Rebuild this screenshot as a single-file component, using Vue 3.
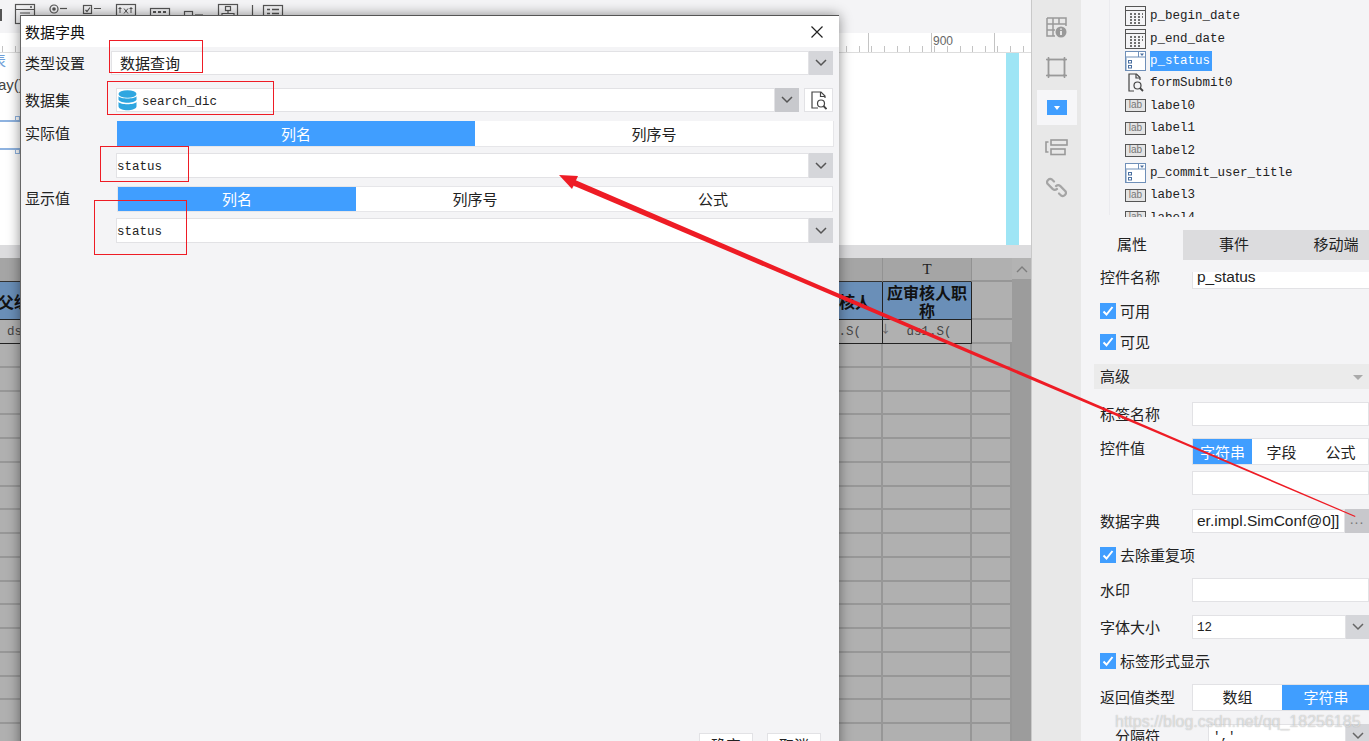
<template>
  <div class="app">
    <!-- left: report designer -->
    <div class="workspace">
      <div class="toolbar">
        <svg class="tool-icons" width="300" height="33" viewBox="0 0 300 33" fill="none" stroke="#555" stroke-width="1.2">
          <rect x="-4" y="9" width="6" height="12" fill="#555" stroke="none" />
          <rect x="15.5" y="4.5" width="19" height="19" />
          <path d="M16 9.5h18M20 13h10M20 16h10" />
          <circle cx="31" cy="7" r="1" fill="#555" stroke="none" />
          <circle cx="54" cy="9" r="4" />
          <circle cx="54" cy="9" r="1.8" fill="#555" stroke="none" />
          <path d="M60 8.5h7" />
          <rect x="83.5" y="5.5" width="8" height="8" />
          <path d="M85.5 10l1.5 1.5 3-4M94 8.5h7" />
          <rect x="116.5" y="4.5" width="19" height="11" />
          <path d="M120 7v6M118.5 8.5h3M124 8.5l4 5M128 8.5l-4 5M131 7v6M129.5 8.5h3" stroke-width="1" />
          <rect x="150.5" y="8.5" width="19" height="9" />
          <path d="M153 12h3M158 12h3M163 12h3" stroke-width="2" />
          <rect x="184.5" y="11.5" width="8" height="8" />
          <path d="M195 15h8" />
          <rect x="218.5" y="4.5" width="19" height="17" />
          <rect x="225.5" y="6.5" width="5" height="4" />
          <path d="M228 10.5v3M222 17v-3.5h12V17" />
          <path d="M252.5 5v13" />
          <rect x="263.5" y="5.5" width="19" height="14" />
          <path d="M267 9.5h3M272 9.5h7M267 13.5h3M272 13.5h7" stroke-width="1.5" />
        </svg>
      </div>
      <div class="ruler"><span class="ruler-label">900</span></div>
      <div class="canvas">
        <span class="canvas-tab">表</span>
        <span class="canvas-text">ay()</span>
        <div class="canvas-guide"></div>
        <div class="canvas-margin"></div>
      </div>
      <div class="splitter"></div>
      <div class="sheet">
        <div class="grid">
          <div v-for="(cell, i) in cells" :key="i" class="cell" :class="cell.cls">{{ cell.text }}</div>
          <span class="cell-marker">↓</span>
        </div>
        <div class="scrollbar">
          <div class="scroll-up">
            <svg width="12" height="8" viewBox="0 0 12 8" fill="none" stroke="#7d7d7d" stroke-width="1.4"><path d="M1 7l5-5 5 5" /></svg>
          </div>
        </div>
      </div>
    </div>

    <!-- vertical icon strip -->
    <div class="strip">
      <div class="strip-btn">
        <svg width="21" height="21" viewBox="0 0 21 21" fill="none" stroke="#999" stroke-width="1.5">
          <path d="M1 1h19v8M1 1v18h8M1 7h19M1 13h8M7 1v18M13 1v6" />
          <circle cx="15" cy="15" r="5.5" fill="#999" stroke="none" />
          <path d="M15 14v4M15 11.5v1.3" stroke="#fff" />
        </svg>
      </div>
      <div class="strip-btn">
        <svg width="21" height="21" viewBox="0 0 21 21" fill="none" stroke="#999" stroke-width="1.5">
          <rect x="2.5" y="2.5" width="16" height="16" stroke-width="1.8" />
          <path d="M0 2.5h4M2.5 0v4M17 2.5h4M18.5 0v4M0 18.5h4M2.5 17v4M17 18.5h4M18.5 17v4" />
        </svg>
      </div>
      <div class="strip-btn is-active">
        <div class="combo-icon"><span class="combo-arrow"></span></div>
      </div>
      <div class="strip-btn">
        <svg width="23" height="17" viewBox="0 0 23 17" fill="none" stroke="#999" stroke-width="1.6">
          <rect x="6" y="1" width="16" height="5" />
          <rect x="6" y="10" width="14" height="5.5" />
          <path d="M3.5 3H1v10h2.5" />
        </svg>
      </div>
      <div class="strip-btn">
        <svg width="21" height="21" viewBox="0 0 21 21" fill="none" stroke="#a5a5a5" stroke-width="2.2" stroke-linecap="round">
          <path d="M8 4.5L6 2.5a3.2 3.2 0 0 0-4.4 4.4l5 5a3.2 3.2 0 0 0 4.4 0" />
          <path d="M13 16.5l2 2a3.2 3.2 0 0 0 4.4-4.4l-5-5a3.2 3.2 0 0 0-4.4 0" />
        </svg>
      </div>
    </div>

    <!-- right: widget tree and properties -->
    <div class="panel">
      <div class="tree">
        <div class="tree-guide"></div>
        <div class="tree-list">
          <div v-for="node in tree" :key="node.name" class="tree-row">
            <svg v-if="node.type === 'date'" class="tree-icon" width="21" height="20" viewBox="0 0 21 20" fill="none" stroke="#555">
              <rect x="0.5" y="0.5" width="20" height="19" />
              <path d="M1 4.5h19" />
              <path d="M5 8h2M9 8h2M13 8h2M17 8h1M5 11h2M9 11h2M13 11h2M17 11h1M5 14h2M9 14h2M13 14h2M5 17h2M9 17h2M13 17h2" stroke-width="1.5" stroke="#444" />
            </svg>
            <svg v-else-if="node.type === 'combo'" class="tree-icon" width="21" height="20" viewBox="0 0 21 20" fill="none" stroke="#6f8fb8">
              <rect x="0.5" y="0.5" width="20" height="19" fill="#fff" />
              <path d="M1 6h19M1 6.5v13M13.5 1v5" />
              <path d="M15 2.5h4l-2 2.5z" fill="#4a6fa0" stroke="none" />
              <rect x="3.5" y="9.5" width="3" height="2.5" stroke="#4a6fa0" />
              <rect x="3.5" y="14.5" width="3" height="2.5" stroke="#4a6fa0" />
            </svg>
            <svg v-else-if="node.type === 'submit'" class="tree-icon" width="21" height="20" viewBox="0 0 21 20" fill="none" stroke="#444" stroke-width="1.2">
              <path d="M15 7V4.5L11.5 1H4v17h5" />
              <path d="M11 1v4h4" />
              <circle cx="12.5" cy="12.5" r="3.5" />
              <path d="M15 15l3 3" stroke-width="1.8" />
            </svg>
            <div v-else class="lab-icon">lab</div>
            <span class="tree-name" :class="{ 'is-selected': node.selected }">{{ node.name }}</span>
          </div>
        </div>
      </div>

      <div class="panel-tabs">
        <div class="panel-tab is-current">属性</div>
        <div class="panel-tab">事件</div>
        <div class="panel-tab">移动端</div>
      </div>

      <div class="form">
        <div class="field field-name">
          <span class="field-label name-label">控件名称</span>
          <div class="input sans clipped">p_status</div>
        </div>
        <label class="check"><span class="box"><svg width="16" height="16" viewBox="0 0 16 16" fill="none" stroke="#fff" stroke-width="2"><path d="M3.5 8.5l3 3 6-7.5" /></svg></span>可用</label>
        <label class="check"><span class="box"><svg width="16" height="16" viewBox="0 0 16 16" fill="none" stroke="#fff" stroke-width="2"><path d="M3.5 8.5l3 3 6-7.5" /></svg></span>可见</label>
        <div class="section">
          <span>高级</span>
          <span class="section-arrow"></span>
        </div>
        <div class="field">
          <span class="field-label">标签名称</span>
          <div class="input"></div>
        </div>
        <div class="field field-value">
          <span class="field-label value-label">控件值</span>
          <div class="seg">
            <div class="seg-item is-on">字符串</div>
            <div class="seg-item">字段</div>
            <div class="seg-item">公式</div>
          </div>
        </div>
        <div class="field field-start">
          <span></span>
          <div class="input"></div>
        </div>
        <div class="field">
          <span class="field-label">数据字典</span>
          <div class="input-group">
            <div class="input sans">er.impl.SimConf@0]]</div>
            <div class="more-btn">...</div>
          </div>
        </div>
        <label class="check"><span class="box"><svg width="16" height="16" viewBox="0 0 16 16" fill="none" stroke="#fff" stroke-width="2"><path d="M3.5 8.5l3 3 6-7.5" /></svg></span>去除重复项</label>
        <div class="field">
          <span class="field-label">水印</span>
          <div class="input"></div>
        </div>
        <div class="field">
          <span class="field-label">字体大小</span>
          <div class="input-group">
            <div class="input mono">12</div>
            <div class="chevron-btn">
              <svg width="12" height="8" viewBox="0 0 12 8" fill="none" stroke="#666" stroke-width="1.5"><path d="M1 1l5 5 5-5" /></svg>
            </div>
          </div>
        </div>
        <label class="check"><span class="box"><svg width="16" height="16" viewBox="0 0 16 16" fill="none" stroke="#fff" stroke-width="2"><path d="M3.5 8.5l3 3 6-7.5" /></svg></span>标签形式显示</label>
        <div class="field">
          <span class="field-label">返回值类型</span>
          <div class="seg seg-two">
            <div class="seg-item">数组</div>
            <div class="seg-item is-on">字符串</div>
          </div>
        </div>
        <div class="field field-sep">
          <span class="field-label">分隔符</span>
          <div class="input-group">
            <div class="input mono">','</div>
            <div class="chevron-btn">
              <svg width="12" height="8" viewBox="0 0 12 8" fill="none" stroke="#666" stroke-width="1.5"><path d="M1 1l5 5 5-5" /></svg>
            </div>
          </div>
        </div>
      </div>
    </div>

    <!-- modal dialog -->
    <div class="dialog">
      <div class="dialog-title">
        <span>数据字典</span>
        <svg width="14" height="14" viewBox="0 0 14 14" fill="none" stroke="#222" stroke-width="1.2"><path d="M1.5 1.5l11 11M12.5 1.5l-11 11" /></svg>
      </div>
      <div class="dialog-body">
        <div class="d-row d-type">
          <span class="d-label">类型设置</span>
          <div class="d-input-group type-group">
            <div class="d-input cn">数据查询</div>
            <div class="d-chevron"><svg width="12" height="8" viewBox="0 0 12 8" fill="none" stroke="#555" stroke-width="1.5"><path d="M1 1l5 5 5-5" /></svg></div>
          </div>
        </div>
        <div class="d-row d-set">
          <span class="d-label">数据集</span>
          <div class="d-set-main">
            <div class="d-input-group">
              <div class="d-input set-input">
                <svg width="19" height="21" viewBox="0 0 19 21" fill="#2fa6e0">
                  <ellipse cx="9.5" cy="4" rx="9" ry="3.8" />
                  <path d="M0.5 6.2c2 3 16 3 18 0v3.600c-2 4-16 4-18 0z" />
                  <path d="M0.5 12c2 3 16 3 18 0v4.500c-1 5-17 5-18 0z" />
                </svg>
                <span class="set-name">search_dic</span>
              </div>
              <div class="d-chevron dark"><svg width="12" height="8" viewBox="0 0 12 8" fill="none" stroke="#555" stroke-width="1.5"><path d="M1 1l5 5 5-5" /></svg></div>
            </div>
            <div class="d-preview">
              <svg width="16" height="19" viewBox="0 0 16 19" fill="none" stroke="#444" stroke-width="1.2">
                <path d="M14 7V5L10 1H1v16h6" />
                <path d="M9.5 1v4.5H14" />
                <circle cx="10" cy="12.5" r="3.5" />
                <path d="M12.5 15l3 3" stroke-width="1.8" />
              </svg>
            </div>
          </div>
        </div>
        <div class="d-row d-tabs1">
          <span class="d-label">实际值</span>
          <div class="d-seg">
            <div class="d-seg-item is-on">列名</div>
            <div class="d-seg-item">列序号</div>
          </div>
        </div>
        <div class="d-row d-status1">
          <span></span>
          <div class="d-input-group status-group">
            <div class="d-input mono">status</div>
            <div class="d-chevron"><svg width="12" height="8" viewBox="0 0 12 8" fill="none" stroke="#555" stroke-width="1.5"><path d="M1 1l5 5 5-5" /></svg></div>
          </div>
        </div>
        <div class="d-row d-tabs2">
          <span class="d-label">显示值</span>
          <div class="d-seg">
            <div class="d-seg-item is-on">列名</div>
            <div class="d-seg-item">列序号</div>
            <div class="d-seg-item">公式</div>
          </div>
        </div>
        <div class="d-row d-status2">
          <span></span>
          <div class="d-input-group status-group">
            <div class="d-input mono">status</div>
            <div class="d-chevron"><svg width="12" height="8" viewBox="0 0 12 8" fill="none" stroke="#555" stroke-width="1.5"><path d="M1 1l5 5 5-5" /></svg></div>
          </div>
        </div>
        <div class="dialog-footer">
          <button class="d-btn">确定</button>
          <button class="d-btn">取消</button>
        </div>
      </div>
    </div>

    <!-- annotations drawn over the screenshot -->
    <svg class="marks" width="1369" height="741" viewBox="0 0 1369 741">
      <g fill="none" stroke="#ee1c25" stroke-width="1">
        <rect x="109.5" y="40.5" width="93" height="32" />
        <rect x="107.5" y="81.5" width="166" height="33" />
        <rect x="100.5" y="146.5" width="88" height="35" />
        <rect x="94.5" y="200.5" width="92" height="54" />
      </g>
      <polygon points="574,179.5 1355.5,516 1355,517 572,185" fill="#ee1c25" />
      <polygon points="559,175 578,176 572,189" fill="#ee1c25" />
    </svg>

    <div class="watermark">https://blog.csdn.net/qq_18256185</div>
  </div>
</template>

<script setup>
const tree = [
  { name: 'p_begin_date', type: 'date' },
  { name: 'p_end_date', type: 'date' },
  { name: 'p_status', type: 'combo', selected: true },
  { name: 'formSubmit0', type: 'submit' },
  { name: 'label0', type: 'lab' },
  { name: 'label1', type: 'lab' },
  { name: 'label2', type: 'lab' },
  { name: 'p_commit_user_title', type: 'combo' },
  { name: 'label3', type: 'lab' },
  { name: 'label4', type: 'lab' }
]

// sheet: column letters, header row, formula row, then empty rows
const cells = [
  { text: '', cls: 'head' }, { text: '', cls: 'head' }, { text: '', cls: 'head' }, { text: 'T', cls: 'head letter' }, { text: '', cls: 'plain' },
  { text: '父级', cls: 'blue far-left' }, { text: '', cls: 'blue' }, { text: '审核人', cls: 'blue right-text' }, { text: '应审核人职称', cls: 'blue' }, { text: '', cls: 'plain' },
  { text: 'ds', cls: 'data far-left' }, { text: '', cls: 'data' }, { text: 'ds1.S(', cls: 'data right-text' }, { text: 'ds1.S(', cls: 'data t-data' }, { text: '', cls: 'plain' }
]
for (let i = 0; i < 85; i++) cells.push({ text: '', cls: 'empty' })
</script>

<style>
html, body {
  margin: 0;
  overflow: hidden;
}
</style>

<style scoped>
.app {
  position: relative;
  display: flex;
  width: 1369px;
  height: 741px;
  overflow: hidden;
  background: #f4f4f6;
  font-family: "Noto Sans CJK SC", "Liberation Sans", sans-serif;
  font-size: 15px;
  line-height: 20px;
  color: #222;
}

.workspace {
  width: 1032px;
  flex: none;
  display: flex;
  flex-direction: column;
  border-right: 1px solid #c9c9c9;
  box-sizing: border-box;
}

.toolbar {
  height: 33px;
  flex: none;
  background: #f4f4f6;
}

.tool-icons {
  display: block;
}

.ruler {
  position: relative;
  height: 20px;
  flex: none;
  background-color: #fff;
  background-image:
    repeating-linear-gradient(90deg, #c4c4c4 0 1px, transparent 1px 12.6px),
    repeating-linear-gradient(90deg, #c4c4c4 0 1px, transparent 1px 63px);
  background-size: 100% 6px, 100% 20px;
  background-position: 2px bottom, 49px bottom;
  background-repeat: no-repeat;
  border-bottom: 1px solid #ddd;
  box-sizing: border-box;
}

.ruler-label {
  position: absolute;
  left: 933px;
  top: -2px;
  font-family: "Liberation Sans", sans-serif;
  font-size: 12px;
  color: #666;
}

.canvas {
  position: relative;
  height: 192px;
  flex: none;
  background: #fff;
}

.canvas-tab {
  position: absolute;
  left: -9px;
  top: -3px;
  color: #6f9fd8;
}

.canvas-text {
  position: absolute;
  left: -2px;
  top: 22px;
  font-family: "Liberation Sans", sans-serif;
  font-size: 15px;
  color: #444;
}

.canvas-guide {
  position: absolute;
  left: 0;
  top: 67px;
  width: 20px;
  height: 26px;
  border-top: 2px solid #8fb3e0;
  border-bottom: 2px solid #8fb3e0;
}

.canvas-guide::before,
.canvas-guide::after {
  content: "";
  position: absolute;
  left: 15px;
  width: 5px;
  height: 5px;
  box-sizing: border-box;
  border: 1px solid #8fb3e0;
  background: #fff;
}

.canvas-guide::before {
  top: -6px;
}

.canvas-guide::after {
  bottom: -6px;
}

.canvas-margin {
  position: absolute;
  left: 1006px;
  top: 0;
  bottom: 0;
  width: 13px;
  background: #9ee5f5;
}

.splitter {
  height: 13px;
  flex: none;
  background: #dcdcde;
}

.sheet {
  flex: 1;
  display: flex;
  min-height: 0;
  overflow: hidden;
  background: #b0b0b0;
}

.grid {
  position: relative;
  width: 1012px;
  flex: none;
  display: grid;
  grid-template-columns: 60px 720px 103px 89px 40px;
  grid-template-rows: 24px 38px 24px;
  grid-auto-rows: 23.75px;
  align-content: start;
}

.cell {
  box-sizing: border-box;
  min-width: 0;
  overflow: hidden;
  display: flex;
  align-items: center;
  justify-content: center;
  text-align: center;
}

.cell-marker {
  position: absolute;
  left: 880px;
  top: 60px;
  font-size: 11px;
  color: #666;
}

.head {
  background: #a5a5a5;
  border-right: 1px solid #929292;
  border-bottom: 1px solid #333;
}

.letter {
  font-family: "Liberation Serif", serif;
  font-size: 15px;
  color: #222;
  padding-bottom: 2px;
}

.plain {
  border-bottom: 2px solid #979797;
}

.blue {
  background: #6a8fb8;
  border-right: 1.5px solid #222;
  border-bottom: 1.5px solid #222;
  font-weight: 700;
  font-size: 16px;
  line-height: 18px;
  color: #111;
}

.data {
  border-right: 1.5px solid #222;
  border-bottom: 1.5px solid #222;
  font-family: "Liberation Mono", monospace;
  font-size: 12.5px;
  color: #444;
}

.t-data {
  padding-left: 4px;
}

.far-left {
  justify-content: flex-start;
  padding-left: 7px;
  white-space: nowrap;
}

.blue.far-left {
  padding-left: 0;
  margin-left: -2px;
}

.right-text {
  justify-content: flex-end;
  white-space: nowrap;
  padding-right: 11px;
}

.data.right-text {
  padding-right: 21px;
}

.empty {
  border-right: 2px solid #979797;
  border-bottom: 2px solid #979797;
}

.scrollbar {
  flex: 1;
  background: #9c9c9c;
}

.scroll-up {
  height: 21px;
  display: flex;
  align-items: center;
  justify-content: center;
  background: #b3b3b3;
}

.strip {
  width: 49px;
  flex: none;
  display: flex;
  flex-direction: column;
  align-items: center;
  padding-top: 10px;
  gap: 5px;
  box-sizing: border-box;
  height: 741px;
  background: #e8e8e8;
}

.strip-btn {
  width: 40px;
  height: 35px;
  flex: none;
  display: flex;
  align-items: center;
  justify-content: center;
}

.strip-btn.is-active {
  background: #f6f6f8;
}

.combo-icon {
  width: 20px;
  height: 15px;
  background: #409eff;
  display: flex;
  align-items: center;
  justify-content: center;
}

.combo-arrow {
  width: 0;
  height: 0;
  border-left: 3px solid transparent;
  border-right: 3px solid transparent;
  border-top: 4px solid #fff;
}

.panel {
  width: 288px;
  flex: none;
  display: flex;
  flex-direction: column;
  height: 741px;
  overflow: hidden;
}

.tree {
  position: relative;
  height: 230px;
  flex: none;
  box-sizing: border-box;
  padding: 5px 0 0 44px;
}

.tree-list {
  height: 212px;
  overflow: hidden;
}

.tree-guide {
  position: absolute;
  left: 28px;
  top: 0;
  height: 215px;
  border-left: 1px solid #ebebef;
}

.tree-row {
  height: 22.4px;
  display: flex;
  align-items: center;
  gap: 4px;
}

.tree-icon {
  flex: none;
}

.lab-icon {
  width: 21px;
  height: 13px;
  flex: none;
  box-sizing: border-box;
  border: 1.5px solid #555;
  background: #e4e4e4;
  font-family: "Liberation Sans", sans-serif;
  font-size: 10px;
  line-height: 10px;
  text-align: center;
  color: #777;
}

.tree-name {
  font-family: "Liberation Mono", monospace;
  font-size: 12.5px;
  line-height: 20px;
  padding: 0 2px 0 0;
  color: #222;
  white-space: nowrap;
}

.tree-name.is-selected {
  background: #409eff;
  color: #fff;
}

.panel-tabs {
  height: 30px;
  flex: none;
  display: flex;
  background: #dcdcde;
}

.panel-tab {
  width: 102px;
  flex: none;
  display: flex;
  align-items: center;
  justify-content: center;
  padding-bottom: 2px;
  box-sizing: border-box;
}

.panel-tab.is-current {
  background: #f4f4f6;
}

.form {
  flex: none;
  margin-top: 12px;
  padding: 0 0 0 19px;
  display: grid;
  grid-template-rows: 22px 34px 28px 40px 36px 39px 26px 48px 20px 50px 24px 44px 28px 50px;
}

.field {
  display: grid;
  grid-template-columns: 92px 177px;
  align-items: center;
}

.field-label {
  white-space: nowrap;
}

.field-name {
  align-items: start;
}

.name-label {
  margin-top: -5px;
}

.value-label {
  align-self: start;
  margin-top: 6px;
}

.field-start {
  align-items: start;
}

.field-sep .field-label {
  padding-left: 15px;
}

.field-sep {
  grid-template-columns: 108px 161px;
}

.input {
  height: 24px;
  box-sizing: border-box;
  background: #fff;
  border: 1px solid #e2e2e5;
  padding-left: 4px;
  display: flex;
  align-items: center;
  white-space: nowrap;
  overflow: hidden;
  flex: 1;
  min-width: 0;
}

.clipped {
  height: 17px;
  border-top: 0;
  border-right: 0;
  align-items: flex-start;
  line-height: 10px;
}

.sans {
  font-family: "Liberation Sans", sans-serif;
  font-size: 15.5px;
}

.mono {
  font-family: "Liberation Mono", monospace;
  font-size: 12.5px;
  padding-top: 1px;
}

.input-group {
  display: flex;
  height: 24px;
}

.more-btn {
  width: 24px;
  flex: none;
  display: flex;
  align-items: center;
  justify-content: center;
  padding-bottom: 5px;
  box-sizing: border-box;
  background: #c8c8cc;
  color: #777;
  font-family: "Liberation Sans", sans-serif;
  font-size: 14px;
  letter-spacing: 1px;
}

.chevron-btn {
  width: 23px;
  flex: none;
  display: flex;
  align-items: center;
  justify-content: center;
  background: #d5d6da;
}

.check {
  display: flex;
  align-items: center;
  gap: 4px;
}

.box {
  width: 16px;
  height: 16px;
  flex: none;
  background: #409eff;
  display: block;
}

.box svg {
  display: block;
}

.section {
  position: relative;
  align-self: start;
  height: 25px;
  margin: 8px 0 0 -6px;
  padding-left: 6px;
  padding-bottom: 2px;
  box-sizing: border-box;
  background: #ebebeb;
  display: flex;
  align-items: center;
}

.section-arrow {
  position: absolute;
  left: 259px;
  top: 11px;
  width: 0;
  height: 0;
  border-left: 5px solid transparent;
  border-right: 5px solid transparent;
  border-top: 5px solid #aaa;
}

.seg {
  display: grid;
  grid-template-columns: 59px 59px 59px;
  height: 27px;
  box-sizing: border-box;
  background: #fff;
  border: 1px solid #e2e2e5;
}

.seg-two {
  grid-template-columns: 89px 88px;
}

.seg-item {
  display: flex;
  align-items: center;
  justify-content: center;
}

.seg-item.is-on {
  background: #409eff;
  color: #fff;
}

.dialog {
  position: absolute;
  left: 20px;
  top: 15px;
  width: 819px;
  height: 760px;
  display: flex;
  flex-direction: column;
  background: #f4f4f6;
  box-shadow: 0 0 12px rgba(0, 0, 0, 0.45);
  border-top: 1px solid #555;
  border-left: 1px solid #666;
  box-sizing: border-box;
}

.dialog-title {
  height: 31px;
  flex: none;
  display: flex;
  align-items: center;
  justify-content: space-between;
  padding: 0 15px 0 4px;
  background: #fff;
  color: #111;
}

.dialog-body {
  flex: 1;
  display: flex;
  flex-direction: column;
  padding: 4px 6px 18px 4px;
  min-height: 0;
}

.d-row {
  display: grid;
  grid-template-columns: 91px 1fr;
  align-items: center;
}

.d-label {
  white-space: nowrap;
}

.d-set {
  margin-top: 13px;
}

.d-tabs1 {
  margin-top: 9px;
}

.d-tabs1 .d-label,
.d-tabs2 .d-label {
  align-self: start;
  margin-top: 2px;
}

.d-status1 {
  margin-top: 6px;
}

.d-tabs2 {
  margin-top: 8px;
}

.d-status2 {
  margin-top: 6px;
}

.d-input-group {
  display: flex;
  flex: 1;
  min-width: 0;
  height: 24px;
}

.type-group {
  margin-left: -5px;
}

.status-group {
  height: 25px;
}

.d-input {
  flex: 1;
  min-width: 0;
  box-sizing: border-box;
  background: #fff;
  border: 1px solid #e2e2e5;
  display: flex;
  align-items: center;
  white-space: nowrap;
}

.cn {
  padding-left: 8px;
}

.d-input.mono {
  padding-left: 0;
  padding-top: 2px;
}

.set-input {
  gap: 5px;
  padding-left: 1px;
  font-family: "Liberation Mono", monospace;
  font-size: 12.5px;
}

.set-name {
  padding-top: 3px;
}

.d-chevron {
  width: 24px;
  flex: none;
  display: flex;
  align-items: center;
  justify-content: center;
  background: #d5d6da;
}

.d-chevron.dark {
  background: #c8c9cd;
}

.d-set-main {
  display: flex;
  gap: 5px;
}

.d-preview {
  width: 29px;
  height: 24px;
  flex: none;
  box-sizing: border-box;
  background: #fff;
  border: 1px solid #e2e2e5;
  display: flex;
  align-items: center;
  justify-content: center;
}

.d-seg {
  height: 26px;
  display: flex;
  box-sizing: border-box;
  background: #fff;
  border: 1px solid #e6e6e9;
}

.d-tabs1 .d-seg {
  margin-left: 1px;
  margin-right: -1px;
  border-width: 0 1px 1px 0;
}

.d-tabs2 .d-seg {
  margin-left: 1px;
}

.d-seg-item {
  flex: 1;
  display: flex;
  align-items: center;
  justify-content: center;
}

.d-seg-item.is-on {
  background: #409eff;
  color: #fff;
}

.dialog-footer {
  margin-top: auto;
  display: flex;
  justify-content: flex-end;
  gap: 14px;
  padding-right: 12px;
}

.d-btn {
  width: 54px;
  height: 24px;
  padding: 0;
  background: #fff;
  border: 1px solid #e2e2e5;
  font: inherit;
  color: #222;
}

.marks {
  position: absolute;
  left: 0;
  top: 0;
  pointer-events: none;
}

.watermark {
  position: absolute;
  left: 1115px;
  top: 712px;
  font-family: "Liberation Sans", sans-serif;
  font-size: 16px;
  color: rgba(255, 255, 255, 0.55);
  text-shadow: 0 0 1px rgba(120, 120, 120, 0.6);
  white-space: nowrap;
}
</style>
